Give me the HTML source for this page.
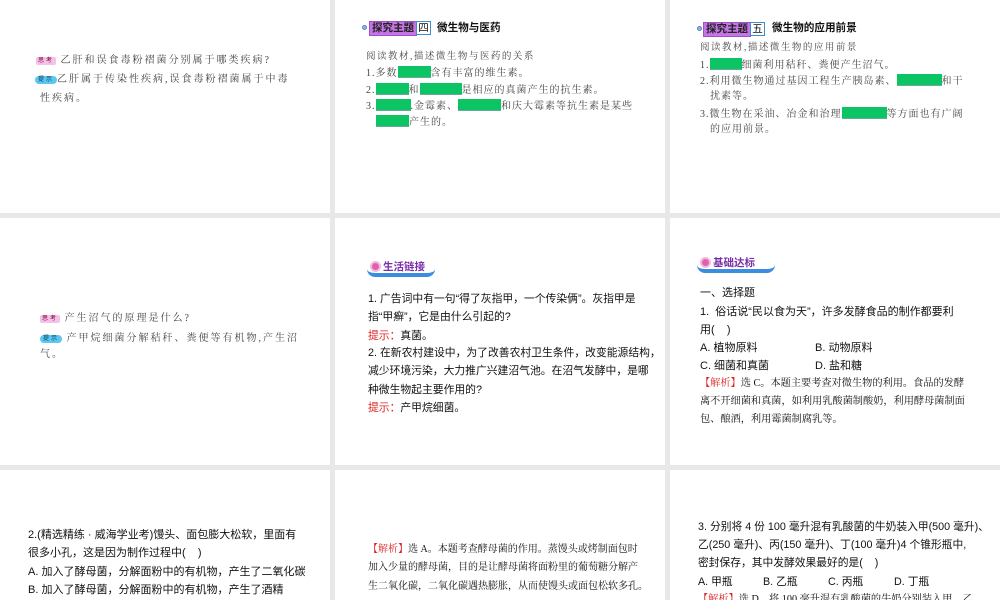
<!DOCTYPE html>
<html><head><meta charset="utf-8">
<style>
*{margin:0;padding:0;box-sizing:border-box}
body{width:1000px;height:600px;background:#e8e8e8;position:relative;overflow:hidden;font-family:"Liberation Serif","Noto Serif CJK SC","Noto Sans CJK SC",serif;color:#111}
.s{position:absolute;background:#fff;overflow:hidden}
.t{position:absolute;white-space:nowrap;font-size:10px;line-height:14px}
.g{color:#444;letter-spacing:2px}
.sans{font-family:"Liberation Sans","Noto Sans CJK SC",sans-serif;font-size:10.6px}
.gb{display:inline-block;background:#0cc464;height:12px;vertical-align:-2px;border-bottom:1px solid #6a9}
.lab{position:absolute;background:#c774e6;border:1px solid #a050c8;color:#222;font-weight:bold;font-size:10.5px;line-height:13px;padding:0 2px;font-family:"Liberation Sans","Noto Sans CJK SC",sans-serif}
.box{position:absolute;border:1.5px solid #3b8fd0;background:#fff;font-size:10.5px;line-height:12px;text-align:center;font-family:"Liberation Sans","Noto Sans CJK SC",sans-serif}
.dot{position:absolute;width:5px;height:5px;border-radius:50%;background:#8fb6e6;border:1px solid #5a84c8}
.red{color:#d22}
.badge{position:absolute;height:17px;border-bottom:4px solid #3a8de0;border-radius:0 0 8px 8px;font-family:"Liberation Sans","Noto Sans CJK SC",sans-serif;font-weight:bold;color:#7a2fa8;font-size:10.5px;line-height:14px}
.badge i{display:inline-block;width:11px;height:11px;border-radius:50%;background:#e060b0;border:2px solid #f4b8dc;vertical-align:-2px;margin-right:2px}
.sk{display:inline-block;background:#f3c2ea;color:#803;font-size:6px;line-height:8px;padding:0 2px;border-radius:2px;font-family:"Liberation Sans","Noto Sans CJK SC",sans-serif;vertical-align:1px}
.ts{display:inline-block;background:#5cc8f0;color:#035;font-size:6px;line-height:8px;padding:0 3px;border-radius:5px;font-family:"Liberation Sans","Noto Sans CJK SC",sans-serif;vertical-align:1px}
.j{font-size:10.2px}
.a{font-size:10.8px}
.b{font-size:11px}
.c{font-size:11px}
.d{font-size:10.75px}
</style></head><body>

<div class="s" style="left:0;top:0;width:330px;height:213px">
 <div class="t g" style="left:36px;top:54px"><span class="sk">思考</span> 乙肝和误食毒粉褶菌分别属于哪类疾病?</div>
 <div class="t g" style="left:35px;top:73px"><span class="ts">提示</span>乙肝属于传染性疾病,误食毒粉褶菌属于中毒</div>
 <div class="t g" style="left:40px;top:92px">性疾病。</div>
</div>

<div class="s" style="left:335px;top:0;width:330px;height:213px">
 <div class="dot" style="left:27px;top:25px"></div>
 <div class="lab" style="left:34px;top:21px">探究主题</div>
 <div class="box" style="left:81px;top:21px;width:15px;height:14px">四</div>
 <div class="t sans" style="left:102px;top:21px;font-weight:bold">微生物与医药</div>
 <div class="t g" style="left:31px;top:50px;font-size:9.5px;letter-spacing:1.5px">阅读教材,描述微生物与医药的关系</div>
 <div class="t g" style="left:31px;top:66px;letter-spacing:1px">1.多数<span class="gb" style="width:33px"></span>含有丰富的维生素。</div>
 <div class="t g" style="left:31px;top:83px;letter-spacing:1px">2.<span class="gb" style="width:33px"></span>和<span class="gb" style="width:42px"></span>是相应的真菌产生的抗生素。</div>
 <div class="t g" style="left:31px;top:99px;letter-spacing:1px">3.<span class="gb" style="width:35px"></span>.金霉素、<span class="gb" style="width:43px"></span>和庆大霉素等抗生素是某些</div>
 <div class="t g" style="left:41px;top:115px;letter-spacing:1px"><span class="gb" style="width:33px"></span>产生的。</div>
</div>

<div class="s" style="left:670px;top:0;width:330px;height:213px">
 <div class="dot" style="left:27px;top:26px"></div>
 <div class="lab" style="left:33px;top:22px">探究主题</div>
 <div class="box" style="left:80px;top:22px;width:15px;height:14px">五</div>
 <div class="t sans" style="left:102px;top:21px;font-weight:bold">微生物的应用前景</div>
 <div class="t g" style="left:30px;top:41px;font-size:9.5px;letter-spacing:1.5px">阅读教材,描述微生物的应用前景</div>
 <div class="t g" style="left:30px;top:58px;letter-spacing:1px">1.<span class="gb" style="width:32px"></span>细菌利用秸秆、粪便产生沼气。</div>
 <div class="t g" style="left:30px;top:74px;letter-spacing:1px">2.利用微生物通过基因工程生产胰岛素、<span class="gb" style="width:45px"></span>和干</div>
 <div class="t g" style="left:40px;top:90px;letter-spacing:1px">扰素等。</div>
 <div class="t g" style="left:30px;top:107px;letter-spacing:1px">3.微生物在采油、冶金和治理<span class="gb" style="width:45px"></span>等方面也有广阔</div>
 <div class="t g" style="left:40px;top:123px;letter-spacing:1px">的应用前景。</div>
</div>

<div class="s" style="left:0;top:218px;width:330px;height:247px">
 <div class="t g" style="left:40px;top:94px"><span class="sk">思考</span> 产生沼气的原理是什么?</div>
 <div class="t g" style="left:40px;top:114px"><span class="ts">提示</span> 产甲烷细菌分解秸秆、粪便等有机物,产生沼</div>
 <div class="t g" style="left:40px;top:130px">气。</div>
</div>

<div class="s" style="left:335px;top:218px;width:330px;height:247px">
 <div class="badge" style="left:32px;top:42px;width:68px;padding-left:3px"><i></i>生活链接</div>
 <div class="t sans a" style="left:33px;top:74px">1. 广告词中有一句“得了灰指甲，一个传染俩”。灰指甲是</div>
 <div class="t sans a" style="left:33px;top:92px">指“甲癣”，它是由什么引起的?</div>
 <div class="t sans a" style="left:33px;top:111px"><span class="red">提示：</span>真菌。</div>
 <div class="t sans a" style="left:33px;top:128px">2. 在新农村建设中，为了改善农村卫生条件，改变能源结构，</div>
 <div class="t sans a" style="left:33px;top:146px">减少环境污染，大力推广兴建沼气池。在沼气发酵中，是哪</div>
 <div class="t sans a" style="left:33px;top:165px">种微生物起主要作用的?</div>
 <div class="t sans a" style="left:33px;top:183px"><span class="red">提示：</span>产甲烷细菌。</div>
</div>

<div class="s" style="left:670px;top:218px;width:330px;height:247px">
 <div class="badge" style="left:27px;top:38px;width:78px;padding-left:3px"><i></i>基础达标</div>
 <div class="t sans b" style="left:30px;top:68px">一、选择题</div>
 <div class="t sans b" style="left:30px;top:87px">1.&nbsp; 俗话说“民以食为天”，许多发酵食品的制作都要利</div>
 <div class="t sans b" style="left:30px;top:105px">用(&nbsp;&nbsp;&nbsp;&nbsp;)</div>
 <div class="t sans b" style="left:30px;top:123px">A. 植物原料</div>
 <div class="t sans b" style="left:145px;top:123px">B. 动物原料</div>
 <div class="t sans b" style="left:30px;top:141px">C. 细菌和真菌</div>
 <div class="t sans b" style="left:145px;top:141px">D. 盐和糖</div>
 <div class="t j" style="left:30px;top:159px"><span class="red">【解析】</span>选 C。本题主要考查对微生物的利用。食品的发酵</div>
 <div class="t j" style="left:30px;top:177px">离不开细菌和真菌，如利用乳酸菌制酸奶，利用酵母菌制面</div>
 <div class="t j" style="left:30px;top:195px">包、酿酒，利用霉菌制腐乳等。</div>
</div>

<div class="s" style="left:0;top:470px;width:330px;height:130px">
 <div class="t sans c" style="left:28px;top:58px">2.(精选精练 · 威海学业考)馒头、面包膨大松软，里面有</div>
 <div class="t sans c" style="left:28px;top:76px">很多小孔，这是因为制作过程中(&nbsp;&nbsp;&nbsp;&nbsp;)</div>
 <div class="t sans c" style="left:28px;top:95px">A. 加入了酵母菌，分解面粉中的有机物，产生了二氧化碳</div>
 <div class="t sans c" style="left:28px;top:113px">B. 加入了酵母菌，分解面粉中的有机物，产生了酒精</div>
</div>

<div class="s" style="left:335px;top:470px;width:330px;height:130px">
 <div class="t" style="left:33px;top:73px"><span class="red">【解析】</span>选 A。本题考查酵母菌的作用。蒸馒头或烤制面包时</div>
 <div class="t" style="left:33px;top:91px">加入少量的酵母菌，目的是让酵母菌将面粉里的葡萄糖分解产</div>
 <div class="t" style="left:33px;top:110px">生二氧化碳，二氧化碳遇热膨胀，从而使馒头或面包松软多孔。</div>
</div>

<div class="s" style="left:670px;top:470px;width:330px;height:130px">
 <div class="t sans d" style="left:28px;top:50px">3. 分别将 4 份 100 毫升混有乳酸菌的牛奶装入甲(500 毫升)、</div>
 <div class="t sans d" style="left:28px;top:68px">乙(250 毫升)、丙(150 毫升)、丁(100 毫升)4 个锥形瓶中,</div>
 <div class="t sans d" style="left:28px;top:86px">密封保存，其中发酵效果最好的是(&nbsp;&nbsp;&nbsp;&nbsp;)</div>
 <div class="t sans d" style="left:28px;top:105px">A. 甲瓶</div>
 <div class="t sans d" style="left:93px;top:105px">B. 乙瓶</div>
 <div class="t sans d" style="left:158px;top:105px">C. 丙瓶</div>
 <div class="t sans d" style="left:224px;top:105px">D. 丁瓶</div>
 <div class="t j" style="left:28px;top:123px"><span class="red">【解析】</span>选 D。将 100 毫升混有乳酸菌的牛奶分别装入甲、乙</div>
</div>

</body></html>
